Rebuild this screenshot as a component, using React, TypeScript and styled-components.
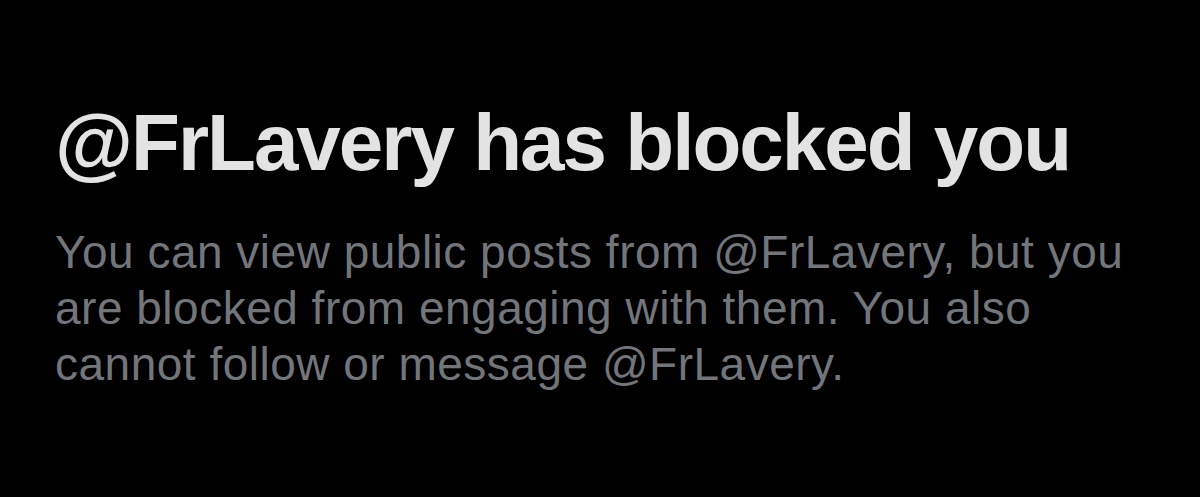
import React from 'react';
import styled, { createGlobalStyle } from 'styled-components';

const GlobalStyle = createGlobalStyle`
  html, body {
    margin: 0;
    padding: 0;
    background: #000;
  }
`;

const App: React.FC = () => (
  <Page>
    <GlobalStyle />
    <Notice>
      <Title>@FrLavery has blocked you</Title>
      <Message>
        You can view public posts from @FrLavery, but you are blocked from engaging with
        them. You also cannot follow or message @FrLavery.
      </Message>
    </Notice>
  </Page>
);

export default App;

const Page = styled.div`
  width: 1200px;
  height: 497px;
  background: #000;
  overflow: hidden;
  font-family: 'Liberation Sans', Arial, sans-serif;
`;

const Notice = styled.section`
  display: flex;
  flex-direction: column;
  gap: 33px;
  padding: 95px 0 0 55px;
`;

const Title = styled.h1`
  margin: 0;
  font-size: 80px;
  line-height: 96px;
  font-weight: 700;
  letter-spacing: -2px;
  color: #e3e3e3;
`;

const Message = styled.p`
  margin: 0;
  max-width: 1120px;
  font-size: 46px;
  line-height: 56px;
  font-weight: 400;
  letter-spacing: 0.5px;
  color: #72767b;
`;
